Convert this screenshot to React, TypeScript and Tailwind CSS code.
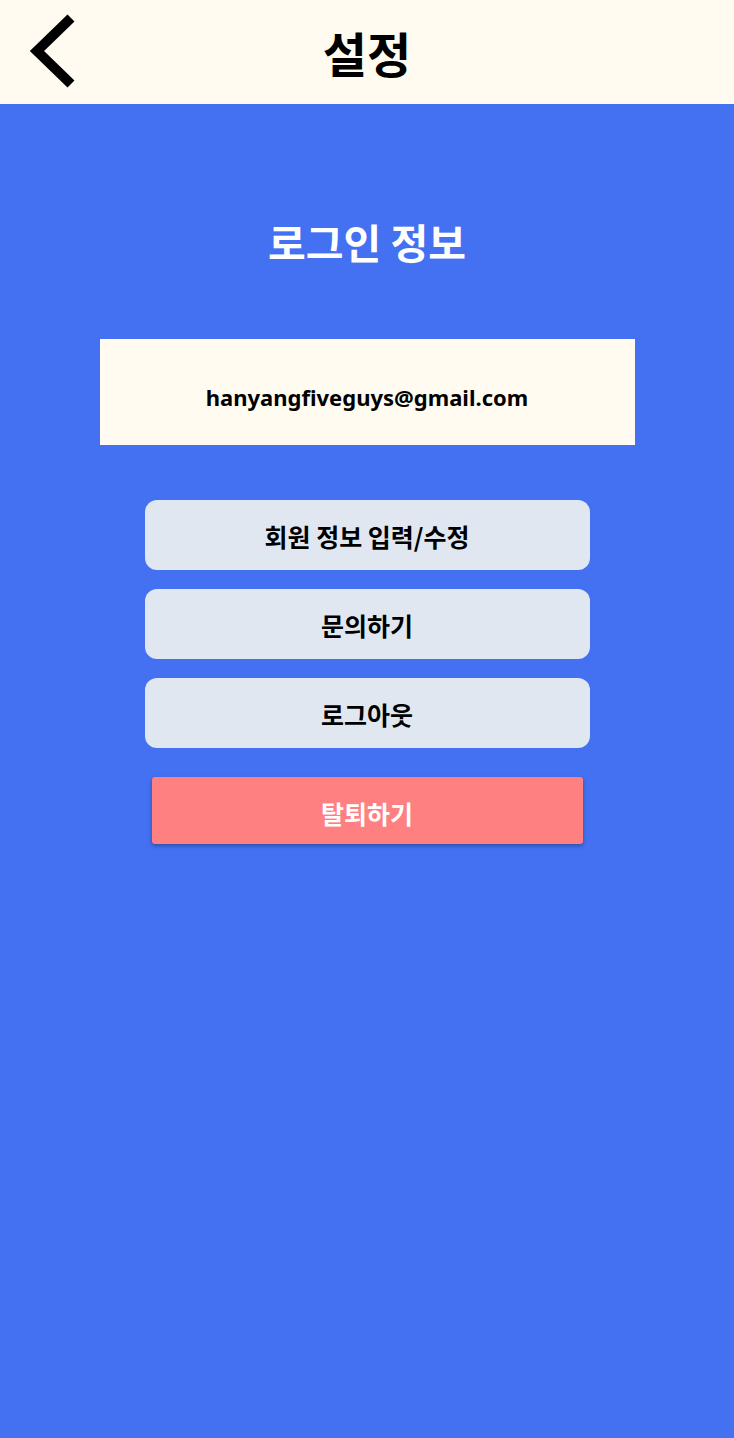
import React from "react";

const font = { fontFamily: '"Noto Sans CJK KR", "Noto Sans", sans-serif' };

export default function App() {
  return (
    <div className="w-[734px] min-h-[1438px] bg-[#4371f2] flex flex-col" style={font}>
      <header className="h-[104px] bg-[#fffbf0] relative flex items-center justify-center">
        <button className="absolute left-[24px] top-[10px] w-[60px] h-[84px] flex items-center justify-center">
          <svg width="60" height="84" viewBox="0 0 60 84">
            <polyline points="47,8 13,41 47,74" fill="none" stroke="#000" strokeWidth="10" strokeLinejoin="miter" />
          </svg>
        </button>
        <h1 className="text-[48px] font-bold text-black leading-none">설정</h1>
      </header>
      <main className="flex flex-col items-center">
        <h2 className="mt-[117px] text-[41px] font-bold text-white leading-none">로그인 정보</h2>
        <div className="mt-[77px] w-[535px] h-[106px] bg-[#fffbf0] flex items-center justify-center pt-[10px]">
          <span className="text-[22px] font-bold text-black" style={{ fontFamily: '"Noto Sans", sans-serif' }}>hanyangfiveguys@gmail.com</span>
        </div>
        <div className="mt-[55px] flex flex-col gap-[19px]">
          {["회원 정보 입력/수정", "문의하기", "로그아웃"].map((t) => (
            <button key={t} className="w-[445px] h-[70px] rounded-[12px] bg-[#e0e7f0] text-[25px] font-bold text-black flex items-center justify-center pt-[4px]">
              {t}
            </button>
          ))}
        </div>
        <button className="mt-[29px] w-[431px] h-[67px] rounded-[3px] bg-[#ff8080] text-white text-[25px] font-bold flex items-center justify-center pt-[6px] shadow-[0_2px_4px_rgba(0,0,0,0.3)]">
          탈퇴하기
        </button>
      </main>
    </div>
  );
}
